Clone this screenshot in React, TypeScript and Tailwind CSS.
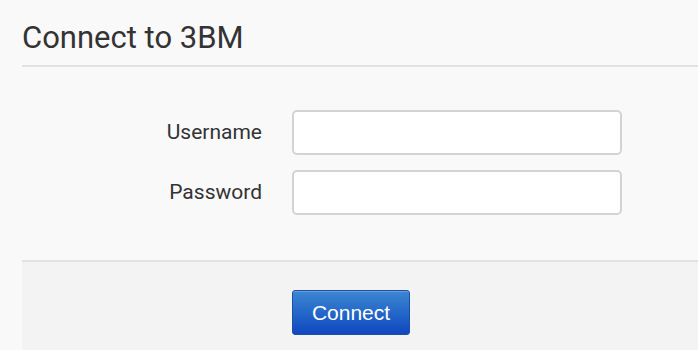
const fields = [
  { label: "Username", type: "text" },
  { label: "Password", type: "password" },
];

const App = () => {
  return (
    <div className="min-h-[350px] bg-[#f9f9f9] pl-[22px] font-['Roboto',sans-serif]">
      <h1 className="pt-[20px] pb-[9px] text-[31px] leading-[36px] text-[#333] border-b-2 border-[#e2e2e2]">
        Connect to 3BM
      </h1>

      <div className="flex flex-col gap-[15px] pt-[43px] pb-[45px]">
        {fields.map((f) => (
          <div key={f.label} className="flex items-center">
            <label className="w-[240px] text-right text-[21px] text-[#333]">{f.label}</label>
            <input
              type={f.type}
              className="ml-[30px] w-[330px] h-[45px] bg-white border-2 border-[#d3d3d3] rounded-[5px] px-2 outline-none"
            />
          </div>
        ))}
      </div>

      <div className="h-[90px] bg-[#f3f3f3] border-t-2 border-[#e2e2e2] pt-[28px] pl-[270px]">
        <button className="w-[118px] h-[45px] rounded-[3px] border border-[#1b4fa3] bg-gradient-to-b from-[#3d86d2] to-[#1147bf] text-white text-[21px] font-['Liberation_Sans',sans-serif] shadow-[inset_0_1px_0_rgba(255,255,255,0.2)]">
          Connect
        </button>
      </div>
    </div>
  );
};

export default App;
